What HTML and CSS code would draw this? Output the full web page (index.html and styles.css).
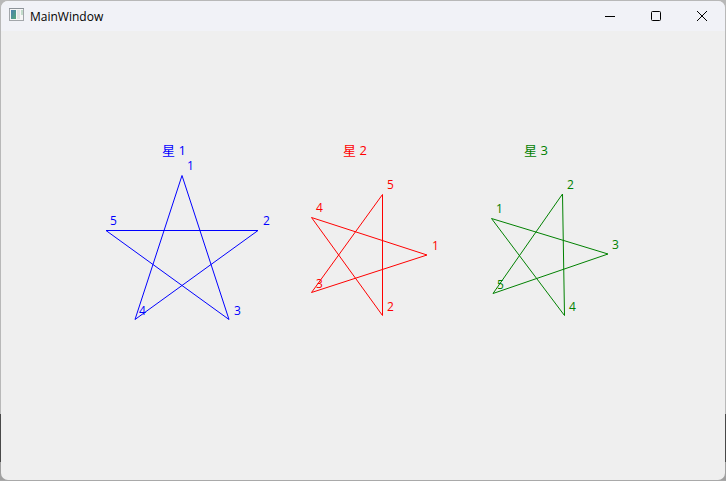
FILE: index.html
```html
<!DOCTYPE html>
<html lang="zh-CN">
<head>
<meta charset="utf-8">
<title>MainWindow</title>
<link rel="stylesheet" href="styles.css">
</head>
<body>
<div class="window">
  <header class="titlebar">
    <svg class="app-icon" width="16" height="16" viewBox="0 0 16 16" aria-hidden="true">
      <defs>
        <linearGradient id="pane" x1="0" y1="0" x2="1" y2="1">
          <stop offset="0" stop-color="#4a7fb0"/>
          <stop offset="1" stop-color="#55a878"/>
        </linearGradient>
      </defs>
      <rect x="0.5" y="0.5" width="14" height="12" fill="#f6f6f6" stroke="#a2a6aa"/>
      <path d="M0 0.5H15" stroke="#8c9298"/>
      <rect x="2" y="2" width="5" height="9" fill="url(#pane)"/>
      <rect x="8" y="2" width="3" height="9" fill="#e2e4e4"/>
      <rect x="12" y="2" width="2" height="5" fill="#c3dccb"/>
    </svg>
    <h1 class="title">MainWindow</h1>
    <div class="controls">
      <button class="control" type="button" aria-label="Minimize">
        <svg width="10" height="10" viewBox="0 0 10 10"><path d="M0 5.5H10"/></svg>
      </button>
      <button class="control" type="button" aria-label="Maximize">
        <svg width="10" height="10" viewBox="0 0 10 10"><rect x="0.5" y="0.5" width="9" height="9" rx="1"/></svg>
      </button>
      <button class="control" type="button" aria-label="Close">
        <svg width="10" height="10" viewBox="0 0 10 10"><path d="M0 0L10 10M10 0L0 10"/></svg>
      </button>
    </div>
  </header>
  <main class="content">
    <svg class="stars" viewBox="1 31 724 449" preserveAspectRatio="xMidYMin meet">
      <g class="star star-blue">
        <polygon points="182,175.5 229,319.5 106,230.5 258,230.5 135,319.5"/>
        <text class="caption" x="162" y="155">星 1</text>
        <text x="187" y="170">1</text>
        <text x="263" y="225">2</text>
        <text x="234" y="315">3</text>
        <text x="139" y="315">4</text>
        <text x="110" y="225">5</text>
      </g>
      <g class="star star-red">
        <polygon points="427,255 311.5,292.5 382.5,194.5 382.5,315.5 311.5,217.5"/>
        <text class="caption" x="343" y="155">星 2</text>
        <text x="432" y="250">1</text>
        <text x="387" y="311">2</text>
        <text x="316" y="288">3</text>
        <text x="316" y="212">4</text>
        <text x="387" y="189">5</text>
      </g>
      <g class="star star-green">
        <polygon points="491.5,218.5 608,254 493,293.5 562.5,194 564.5,315.5"/>
        <text class="caption" x="524" y="155">星 3</text>
        <text x="496" y="213">1</text>
        <text x="567" y="189">2</text>
        <text x="612" y="249">3</text>
        <text x="569" y="311">4</text>
        <text x="497" y="289">5</text>
      </g>
    </svg>
  </main>
</div>
</body>
</html>
```
FILE: styles.css
```css
* {
  box-sizing: border-box;
}

body {
  margin: 0;
  min-height: 100vh;
  display: flex;
  padding: 1px;
  background:
    linear-gradient(#a9a9a9, #a9a9a9) bottom / 100% 1px no-repeat,
    linear-gradient(#b8b8b8 86%, #484848 86%, #484848 96%, #a0a0a0 96%);
  font-family: "Open Sans", "Noto Sans CJK SC", sans-serif;
  font-size: 12px;
}

.window {
  flex: 1;
  display: flex;
  flex-direction: column;
  overflow: hidden;
  border-radius: 7px;
  background: #efefef;
}

.titlebar {
  display: flex;
  align-items: center;
  height: 30px;
  padding-left: 8px;
  background: #f1f2f7;
}

.app-icon {
  flex: none;
}

.title {
  flex: 1;
  margin: 0 0 0 5px;
  font-size: 12px;
  font-weight: 400;
  color: #000;
}

.controls {
  display: flex;
  align-self: stretch;
}

.control {
  display: flex;
  align-items: center;
  justify-content: center;
  width: 46px;
  padding: 0;
  border: 0;
  background: transparent;
}

.control svg {
  overflow: visible;
  fill: none;
  stroke: #000;
}

.content {
  flex: 1;
}

.stars {
  display: block;
  width: 100%;
}

.star {
  fill: currentColor;
}

.star polygon {
  fill: none;
  stroke: currentColor;
}

.caption {
  font-size: 13px;
}

.star-blue {
  color: #0000ff;
}

.star-red {
  color: #ff0000;
}

.star-green {
  color: #008000;
}
```
